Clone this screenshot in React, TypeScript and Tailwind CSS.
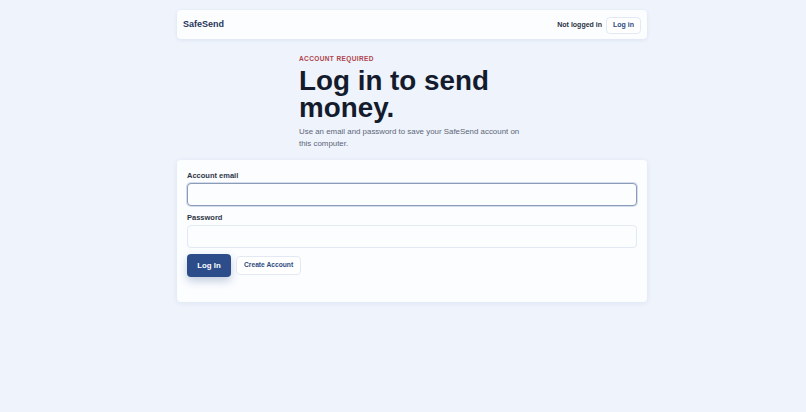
import React from "react";

export default function App() {
  return (
    <div className="min-h-[412px] w-full bg-[#eef3fc] pl-[18px] pt-[10px]" style={{ fontFamily: '"Liberation Sans", Arial, sans-serif' }}>
      <div className="mx-auto w-[470px]">
        <header className="flex h-[29px] items-center justify-between rounded-[4px] bg-[#fbfdff] pl-[6px] pr-[6px] pt-[1px] shadow-[0_1px_4px_rgba(30,50,90,0.08)]">
          <div className="text-[9px] font-bold text-[#27365a]">SafeSend</div>
          <div className="flex items-center gap-[4px]">
            <span className="text-[7px] font-bold text-[#2a3140]">Not logged in</span>
            <button className="h-[17px] rounded-[4px] border border-[#e3e9f3] bg-white px-[6px] text-[7px] font-bold text-[#2d4a80]">Log in</button>
          </div>
        </header>

        <section className="mx-auto mt-[16px] w-[226px]">
          <div className="text-[6.5px] font-bold leading-[8px] tracking-[0.06em] text-[#b0444c]">ACCOUNT REQUIRED</div>
          <h1 className="mt-[4px] text-[27.8px] font-bold leading-[27px] text-[#141b2d]">Log in to send money.</h1>
          <p className="mt-[5px] text-[7.9px] leading-[12px] text-[#5d6677]">Use an email and password to save your SafeSend account on this computer.</p>
        </section>

        <div className="mt-[10px] h-[142px] rounded-[4px] bg-[#fbfdff] px-[10px] pt-[11px] shadow-[0_1px_6px_rgba(30,50,90,0.08)]">
          <label className="block text-[7.5px] font-bold leading-[9px] text-[#2f3645]">Account email</label>
          <input className="mt-[3px] block h-[23px] w-full rounded-[4px] border border-[#8c9cb8] bg-[#fbfdff] shadow-[0_0_0_1px_rgba(140,160,200,0.35)] outline-none" />
          <label className="mt-[7px] block text-[7.5px] font-bold leading-[9px] text-[#2f3645]">Password</label>
          <input type="password" className="mt-[3px] block h-[23px] w-full rounded-[4px] border border-[#e3e9f3] bg-[#fbfdff] outline-none" />
          <div className="mt-[6px] flex items-center gap-[5px]">
            <button className="h-[23px] w-[44px] rounded-[4px] bg-[#2c4d89] text-[7.8px] font-bold text-white shadow-[0_4px_8px_rgba(30,60,120,0.25)]">Log In</button>
            <button className="h-[19px] rounded-[4px] border border-[#e3e9f3] bg-white px-[7px] text-[6.7px] font-bold text-[#2d4a80]">Create Account</button>
          </div>
        </div>
      </div>
    </div>
  );
}
